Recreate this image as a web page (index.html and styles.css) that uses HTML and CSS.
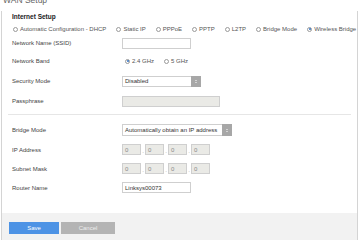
FILE: index.html
```html
<!DOCTYPE html>
<html lang="en">
<head>
    <meta charset="UTF-8">
    <title>WAN Setup</title>
    <link rel="stylesheet" href="styles.css">
</head>
<body>
<div class="page-title">WAN Setup</div>
<div class="panel">
    <div class="content">
        <div class="section-title">Internet Setup</div>
        <div class="conn-types">
            <span class="radio"><i class="circle"></i>Automatic Configuration - DHCP</span>
            <span class="radio"><i class="circle"></i>Static IP</span>
            <span class="radio"><i class="circle"></i>PPPoE</span>
            <span class="radio"><i class="circle"></i>PPTP</span>
            <span class="radio"><i class="circle"></i>L2TP</span>
            <span class="radio"><i class="circle"></i>Bridge Mode</span>
            <span class="radio"><i class="circle checked"></i>Wireless Bridge</span>
        </div>

        <div class="row row-ssid">
            <span class="label">Network Name (SSID)</span>
            <span class="field text-field"></span>
        </div>
        <div class="row">
            <span class="label">Network Band</span>
            <div class="band">
                <span class="radio"><i class="circle checked"></i>2.4 GHz</span>
                <span class="radio"><i class="circle"></i>5 GHz</span>
            </div>
        </div>
        <div class="row">
            <span class="label">Security Mode</span>
            <span class="field select select-short">Disabled<b class="spinner"></b></span>
        </div>
        <div class="row">
            <span class="label">Passphrase</span>
            <span class="field disabled pass-field"></span>
        </div>

        <div class="divider"></div>

        <div class="row">
            <span class="label">Bridge Mode</span>
            <span class="field select select-long">Automatically obtain an IP address<b class="spinner"></b></span>
        </div>
        <div class="row row-sm">
            <span class="label">IP Address</span>
            <div class="octets">
                <span class="field disabled octet">0</span><span class="sep">.</span>
                <span class="field disabled octet">0</span><span class="sep">.</span>
                <span class="field disabled octet">0</span><span class="sep">.</span>
                <span class="field disabled octet">0</span>
            </div>
        </div>
        <div class="row row-sm">
            <span class="label">Subnet Mask</span>
            <div class="octets">
                <span class="field disabled octet">0</span><span class="sep">.</span>
                <span class="field disabled octet">0</span><span class="sep">.</span>
                <span class="field disabled octet">0</span><span class="sep">.</span>
                <span class="field disabled octet">0</span>
            </div>
        </div>
        <div class="row row-sm">
            <span class="label">Router Name</span>
            <span class="field text-field">Linksys00073</span>
        </div>
    </div>
    <div class="footer">
        <button class="btn btn-save">Save</button>
        <button class="btn btn-cancel">Cancel</button>
    </div>
</div>
</body>
</html>
```

FILE: styles.css
```css
body {
    margin: 0;
    background: #fff;
    font-family: "Liberation Sans", Arial, sans-serif;
    color: #444;
    overflow: hidden;
}
.page-title {
    margin: -5px 0 0 3px;
    height: 11px;
    font-size: 8.5px;
    line-height: 10px;
    color: #666;
}
.panel {
    margin: 5px 2px 0 1px;
    border-left: 1px solid #d4d4d4;
    border-right: 1px solid #d4d4d4;
}
.content {
    padding: 0 6px 16px 10px;
}
.section-title {
    height: 12px;
    line-height: 12px;
    font-size: 6.5px;
    font-weight: bold;
    color: #222;
}
.conn-types {
    display: flex;
    align-items: center;
    gap: 10px;
    height: 12px;
    margin-left: 1px;
    white-space: nowrap;
}
.radio {
    display: inline-flex;
    align-items: center;
    font-size: 6px;
    color: #555;
}
.circle {
    display: inline-block;
    box-sizing: border-box;
    width: 5px;
    height: 5px;
    margin-right: 2px;
    border: 1px solid #9a9a9a;
    border-radius: 50%;
    background: #fff;
    position: relative;
}
.circle.checked::after {
    content: "";
    position: absolute;
    left: 0.5px;
    top: 0.5px;
    width: 2px;
    height: 2px;
    border-radius: 50%;
    background: #2f6fc0;
}
.row {
    display: flex;
    align-items: center;
    height: 20px;
}
.row-ssid {
    height: 16px;
}
.row-sm {
    height: 19px;
}
.label {
    width: 110px;
    flex: none;
    font-size: 6px;
    color: #444;
}
.field {
    display: inline-flex;
    align-items: center;
    box-sizing: border-box;
    height: 11px;
    padding-left: 2px;
    border: 1px solid #cfcfcf;
    background: #fff;
    font-size: 6px;
    color: #333;
    white-space: nowrap;
}
.text-field {
    width: 69px;
}
.disabled {
    background: #eaeae6;
    color: #888;
}
.pass-field {
    width: 98px;
}
.select {
    justify-content: space-between;
    padding-right: 0;
}
.select-short {
    width: 79px;
}
.select-long {
    width: 110px;
    height: 12px;
}
.spinner {
    display: flex;
    flex-direction: column;
    align-items: center;
    justify-content: center;
    gap: 1px;
    align-self: stretch;
    width: 10px;
    margin: -1px -1px -1px 0;
    background: #a7a7a7;
}
.spinner::before,
.spinner::after {
    content: "";
    border-left: 1.5px solid transparent;
    border-right: 1.5px solid transparent;
}
.spinner::before {
    border-bottom: 1.5px solid #fff;
}
.spinner::after {
    border-top: 1.5px solid #fff;
}
.band {
    display: flex;
    align-items: center;
    gap: 10px;
    margin-left: 3px;
}
.octets {
    display: flex;
    align-items: center;
}
.octet {
    width: 19px;
}
.sep {
    width: 4px;
    text-align: center;
    font-size: 6px;
    color: #999;
    padding-top: 3px;
}
.divider {
    height: 1px;
    margin: 3px 0 5px -4px;
    background: #e6e6e6;
}
.footer {
    display: flex;
    gap: 2px;
    height: 27px;
    padding: 9px 0 0 7px;
    box-sizing: border-box;
    background: #f2f2f2;
}
.btn {
    width: 50px;
    height: 12px;
    padding: 0;
    border: none;
    font-family: "Liberation Sans", Arial, sans-serif;
    font-size: 6px;
}
.btn-save {
    background: #4d93e5;
    color: #fff;
}
.btn-cancel {
    width: 54px;
    background: #b4b4b4;
    color: #eee;
}
```
